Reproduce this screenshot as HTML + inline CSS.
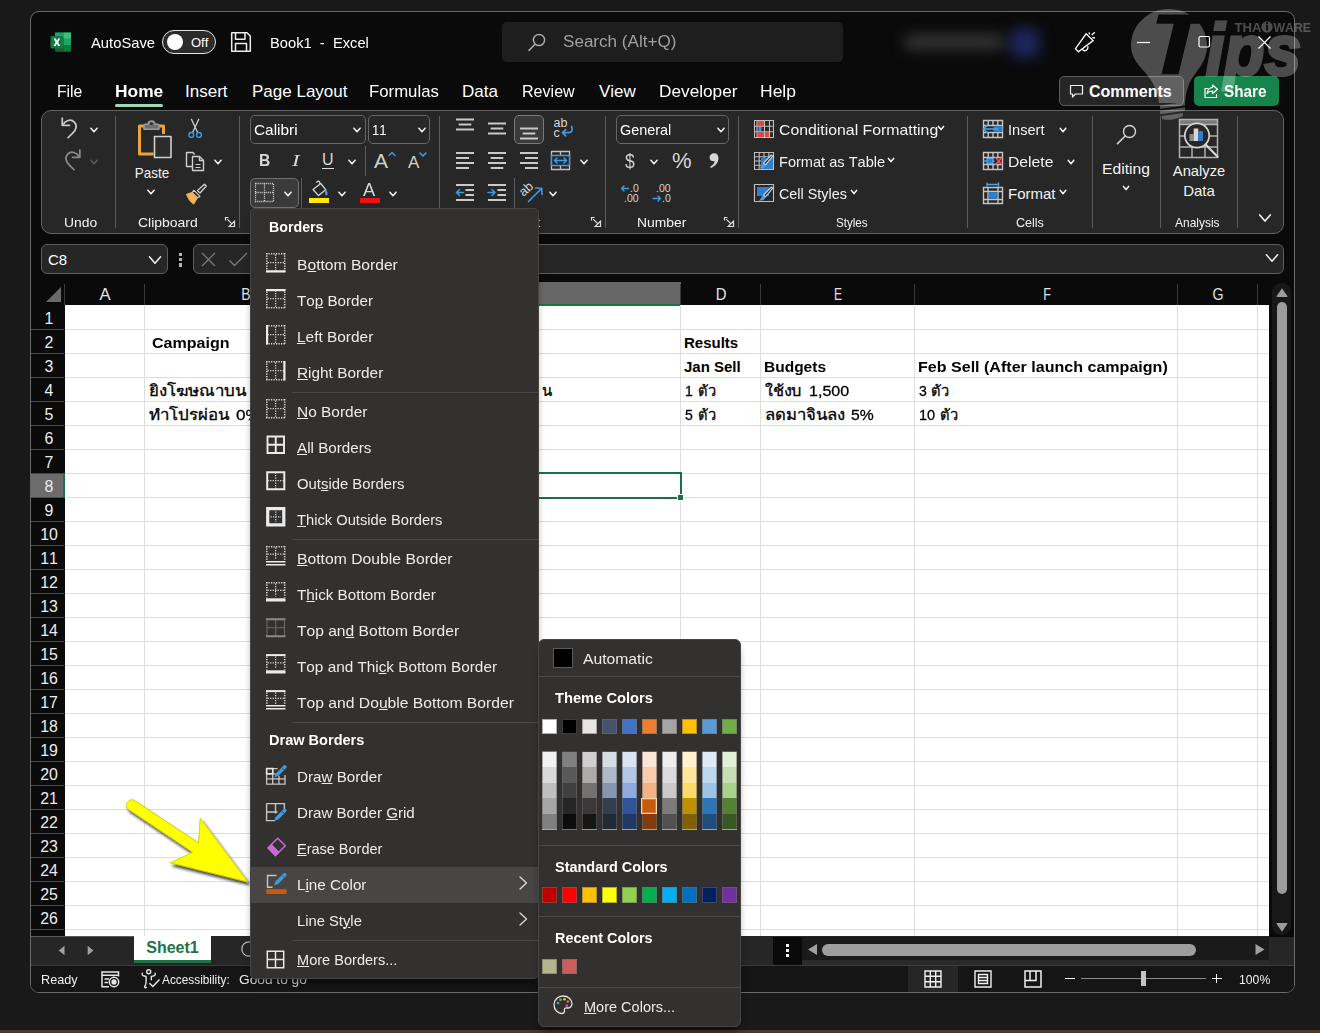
<!DOCTYPE html>
<html><head><meta charset="utf-8"><title>Excel</title><style>
html,body{margin:0;padding:0;background:#191919;}
#r{position:relative;width:1320px;height:1033px;overflow:hidden;background:#191919;font-family:"Liberation Sans",sans-serif;font-kerning:none;}
#r div,#r svg,#r span{position:absolute;box-sizing:border-box;}
#r span{white-space:nowrap;transform-origin:0 50%;line-height:20px;height:20px;}
#r u{text-decoration:underline;text-underline-offset:1px;text-decoration-thickness:1px;}
</style></head><body><div id="r">
<div style="left:30px;top:11px;width:1265px;height:982px;background:#0a0a0a;border:1px solid #6a6a6a;border-radius:9px;"></div>
<div style="left:0px;top:1030px;width:1320px;height:3px;background:#4a382d;"></div>
<svg style="left:50px;top:31px;" width="22" height="22" viewBox="0 0 22 22">
<rect x="5" y="1.500" width="16" height="19" rx="1.600" fill="#185c37"/>
<rect x="5" y="1.500" width="8.500" height="6.300" fill="#21a366"/>
<rect x="13.5" y="1.5" width="7.5" height="6.3" fill="#33c481"/>
<rect x="5" y="7.800" width="8.500" height="6.300" fill="#107c41"/>
<rect x="13.5" y="7.8" width="7.5" height="6.3" fill="#21a366"/>
<rect x="13.5" y="14.1" width="7.5" height="6.4" fill="#107c41"/>
<rect x="5" y="14.100" width="8.500" height="6.400" fill="#185c37"/>
<rect x="0.500" y="5" width="12.800" height="12.500" rx="1.400" fill="#107c41"/>
<path d="M3.600 7.500h2.200l1.150 2.400 1.150-2.400h2.100l-2.150 3.700 2.200 3.700H8.100l-1.250-2.500-1.250 2.500H3.500l2.200-3.700z" fill="#fff"/>
</svg>
<span style="left:91px;top:33px;font-size:15px;color:#fff;transform:scaleX(0.9844);">AutoSave</span>
<div style="left:162px;top:29.5px;width:54px;height:24.5px;background:#2b2b2b;border:1.8px solid #e4e4e4;border-radius:12.5px;"></div>
<div style="left:166.5px;top:33.5px;width:16.5px;height:16.5px;background:#ffffff;border-radius:9px;"></div>
<span style="left:191px;top:33px;font-size:13px;color:#fff;transform:scaleX(1.0000);">Off</span>
<svg style="left:230px;top:31px;" width="22" height="22" viewBox="0 0 22 22"><path d="M1.700 1.700h15.300l3.300 3.300v15.300h-18.600z M5.500 1.700v6.500h9.500v-6.500 M5.500 20.300v-7.800h11v7.800" fill="none" stroke="#ececec" stroke-width="1.500" stroke-linejoin="round"/></svg>
<span style="left:270px;top:33px;font-size:15px;color:#fff;transform:scaleX(0.9800);">Book1&nbsp; -&nbsp; Excel</span>
<div style="left:502px;top:22px;width:341px;height:40px;background:#1e1e1e;border-radius:5px;"></div>
<svg style="left:526px;top:31px;" width="22" height="22" viewBox="0 0 22 22"><circle cx="13" cy="9" r="5.6" fill="none" stroke="#a8a8a8" stroke-width="1.5"/><path d="M9 13.2L3 19.4" stroke="#a8a8a8" stroke-width="1.6" stroke-linecap="round"/></svg>
<span style="left:563px;top:32px;font-size:16px;color:#a0a0a0;transform:scaleX(1.0667);">Search (Alt+Q)</span>
<div style="left:898px;top:26px;width:150px;height:34px;filter:blur(7px);"><div style="left:6px;top:9px;width:100px;height:14px;background:#383838;border-radius:6px;"></div><div style="left:112px;top:2px;width:30px;height:30px;background:#1f2a66;border-radius:10px;opacity:.9;"></div></div>
<svg style="left:1073px;top:29px;" width="24" height="24" viewBox="0 0 24 24"><g fill="none" stroke="#f4f4f4" stroke-width="1.400" stroke-linejoin="miter" stroke-linecap="butt"><path d="M13.100 4.800l7 6.800-14.700 11.100-2.900-3z"/><path d="M9.100 19.700c1 2.600 4.400 2.600 5.400 0.300 0.400-0.900 0.500-1.800 0.300-2.700"/><path d="M16 3.400l0.600 1.900M18.700 6l3.100-2.700M19.300 8.500l2.700 0.400" stroke-width="1.500"/></g></svg>
<svg style="left:1134px;top:34px;" width="18" height="18" viewBox="0 0 18 18"><path d="M3 8.5h13" stroke="#fff" stroke-width="1.2"/></svg>
<svg style="left:1196px;top:34px;" width="18" height="18" viewBox="0 0 18 18"><rect x="3" y="2.5" width="10.5" height="10.5" rx="1.5" fill="none" stroke="#fff" stroke-width="1.2"/></svg>
<svg style="left:1255px;top:33px;" width="20" height="20" viewBox="0 0 20 20"><path d="M3.5 3.5l12 12M15.5 3.5l-12 12" stroke="#fff" stroke-width="1.2"/></svg>
<span style="left:57px;top:82px;font-size:17px;color:#fff;transform:scaleX(0.9259);">File</span>
<span style="left:115px;top:82px;font-size:17px;color:#fff;font-weight:700;transform:scaleX(1.0217);">Home</span>
<span style="left:185px;top:82px;font-size:17px;color:#fff;transform:scaleX(1.0000);">Insert</span>
<span style="left:252px;top:82px;font-size:17px;color:#fff;transform:scaleX(1.0000);">Page Layout</span>
<span style="left:369px;top:82px;font-size:17px;color:#fff;transform:scaleX(0.9857);">Formulas</span>
<span style="left:462px;top:82px;font-size:17px;color:#fff;transform:scaleX(1.0000);">Data</span>
<span style="left:522px;top:82px;font-size:17px;color:#fff;transform:scaleX(0.9455);">Review</span>
<span style="left:599px;top:82px;font-size:17px;color:#fff;transform:scaleX(1.0000);">View</span>
<span style="left:659px;top:82px;font-size:17px;color:#fff;transform:scaleX(1.0132);">Developer</span>
<span style="left:760px;top:82px;font-size:17px;color:#fff;transform:scaleX(1.0294);">Help</span>
<div style="left:115px;top:103.6px;width:48px;height:3.1px;background:#9fd7b9;border-radius:2px;"></div>
<div style="left:1059px;top:76px;width:125px;height:30px;background:#262626;border:1px solid #5a5a5a;border-radius:5px;"></div>
<svg style="left:1068px;top:83px;" width="17" height="17" viewBox="0 0 17 17"><path d="M2.5 2.5h12v8.500h-7l-3 3v-3h-2z" fill="none" stroke="#f0f0f0" stroke-width="1.2" stroke-linejoin="round"/></svg>
<span style="left:1089px;top:82px;font-size:16px;color:#fff;font-weight:700;transform:scaleX(1.0000);">Comments</span>
<div style="left:1194px;top:76px;width:85px;height:30px;background:#15854b;border-radius:5px;"></div>
<svg style="left:1202px;top:82px;" width="18" height="18" viewBox="0 0 18 18"><g fill="none" stroke="#fff" stroke-width="1.2" stroke-linejoin="round" stroke-linecap="round"><path d="M6 6.500H3v9h11.500v-3"/><path d="M10.500 3l5 4.200-5 4.300V9c-2.600 0-4.200 0.800-5.400 2.600 0.300-3.400 2.200-5.800 5.400-6.100z"/></g></svg>
<span style="left:1224px;top:82px;font-size:16px;color:#fff;font-weight:700;transform:scaleX(0.9556);">Share</span>
<div style="left:41px;top:110px;width:1243px;height:124px;background:#272727;border:1px solid #626262;border-radius:10px;"></div>
<div style="left:115px;top:116px;width:1px;height:112px;background:#5c5c5c;"></div>
<div style="left:239px;top:116px;width:1px;height:112px;background:#5c5c5c;"></div>
<div style="left:439px;top:116px;width:1px;height:112px;background:#5c5c5c;"></div>
<div style="left:605px;top:116px;width:1px;height:112px;background:#5c5c5c;"></div>
<div style="left:738px;top:116px;width:1px;height:112px;background:#5c5c5c;"></div>
<div style="left:967px;top:116px;width:1px;height:112px;background:#5c5c5c;"></div>
<div style="left:1092px;top:116px;width:1px;height:112px;background:#5c5c5c;"></div>
<div style="left:1160px;top:116px;width:1px;height:112px;background:#5c5c5c;"></div>
<div style="left:1237px;top:116px;width:1px;height:112px;background:#5c5c5c;"></div>
<span style="left:64px;top:213px;font-size:13px;color:#f2f2f2;transform:scaleX(1.0667);">Undo</span>
<span style="left:138px;top:213px;font-size:13px;color:#f2f2f2;transform:scaleX(1.0741);">Clipboard</span>
<span style="left:637px;top:213px;font-size:13px;color:#f2f2f2;transform:scaleX(1.0667);">Number</span>
<span style="left:836px;top:213px;font-size:13px;color:#f2f2f2;transform:scaleX(0.8919);">Styles</span>
<span style="left:1016px;top:213px;font-size:13px;color:#f2f2f2;transform:scaleX(0.9655);">Cells</span>
<span style="left:1175px;top:213px;font-size:13px;color:#f2f2f2;transform:scaleX(0.9200);">Analysis</span>
<span style="left:536.5px;top:213px;font-size:13px;color:#f2f2f2;">t</span>
<svg style="left:224px;top:216px;" width="12" height="12" viewBox="0 0 12 12"><path d="M1.5 4.5v-3h3 M3.200 3.200l5 5 M10.500 5.200v5.300h-5.300z" fill="none" stroke="#e0e0e0" stroke-width="1.2" stroke-linejoin="miter"/></svg>
<svg style="left:590px;top:216px;" width="12" height="12" viewBox="0 0 12 12"><path d="M1.5 4.5v-3h3 M3.200 3.200l5 5 M10.500 5.200v5.300h-5.300z" fill="none" stroke="#e0e0e0" stroke-width="1.2" stroke-linejoin="miter"/></svg>
<svg style="left:723px;top:216px;" width="12" height="12" viewBox="0 0 12 12"><path d="M1.5 4.5v-3h3 M3.200 3.200l5 5 M10.500 5.200v5.300h-5.300z" fill="none" stroke="#e0e0e0" stroke-width="1.2" stroke-linejoin="miter"/></svg>
<svg style="left:57px;top:114px;" width="28" height="28" viewBox="0 0 28 28"><g transform="scale(1.17)" fill="none" stroke="#c8c8c8" stroke-width="1.5" stroke-linecap="round" stroke-linejoin="round"><path d="M4.5 3.5v6.200h6.200"/><path d="M4.800 9.500c2.200-4 7-5.600 10-2.600 2.800 2.800 1.600 6.600-1.400 9.400l-4 4"/></g></svg>
<svg style="left:86px;top:122px;" width="16" height="16" viewBox="0 0 16 16"><path d="M4.9 6.2L8 9.8L11.100 6.2" fill="none" stroke="#f0f0f0" stroke-width="1.55" stroke-linecap="round" stroke-linejoin="round"/></svg>
<svg style="left:57px;top:146px;" width="28" height="28" viewBox="0 0 28 28"><g transform="scale(1.17)" fill="none" stroke="#8a8a8a" stroke-width="1.5" stroke-linecap="round" stroke-linejoin="round"><path d="M19.500 3.500v6.200h-6.200"/><path d="M19.200 9.500c-2.200-4-7-5.600-10-2.600-2.800 2.800-1.600 6.600 1.400 9.400l4 4"/></g></svg>
<svg style="left:86px;top:154px;" width="16" height="16" viewBox="0 0 16 16"><path d="M4.9 6.2L8 9.8L11.100 6.2" fill="none" stroke="#5a5a5a" stroke-width="1.55" stroke-linecap="round" stroke-linejoin="round"/></svg>
<svg style="left:134px;top:118px;" width="40" height="42" viewBox="0 0 40 42"><g fill="none" stroke-linejoin="round">
<path d="M10 8H5.500v28h14" stroke="#e8a33d" stroke-width="3"/>
<path d="M24 8h5.500v8" stroke="#e8a33d" stroke-width="3"/>
<path d="M10 11.200V7.400c0-0.800 0.500-1.200 1.200-1.200h3c0-4.400 6.600-4.400 6.600 0h3c0.700 0 1.200 0.400 1.200 1.200v3.800z" stroke="#9a9a9a" stroke-width="1.500" fill="#6e6e6e"/>
<circle cx="17.500" cy="5.800" r="1.300" fill="#272727" stroke="none"/>
<rect x="20.500" y="18.500" width="16.500" height="21" stroke="#d0d0d0" stroke-width="1.600" fill="#2c2c2c"/>
</g></svg>
<span style="left:152px;top:163px;font-size:15px;color:#f2f2f2;transform:translateX(-50%) scaleX(0.8947);transform-origin:50% 50%;">Paste</span>
<svg style="left:143px;top:184px;" width="16" height="16" viewBox="0 0 16 16"><path d="M4.9 6.2L8 9.8L11.100 6.2" fill="none" stroke="#f0f0f0" stroke-width="1.55" stroke-linecap="round" stroke-linejoin="round"/></svg>
<svg style="left:185px;top:117px;" width="22" height="26" viewBox="0 0 22 26"><g transform="scale(0.920)" fill="none" stroke-linecap="round"><path d="M7 2.500l6.600 14M15 2.500L8.400 16.500" stroke="#d0d0d0" stroke-width="1.4"/><circle cx="6.8" cy="19.500" r="2.6" stroke="#3f9be0" stroke-width="1.5"/><circle cx="15.200" cy="19.500" r="2.6" stroke="#3f9be0" stroke-width="1.5"/></g></svg>
<svg style="left:183px;top:150px;" width="24" height="24" viewBox="0 0 24 24"><g fill="none" stroke="#d0d0d0" stroke-width="1.4" stroke-linejoin="round"><path d="M9.500 16.500h-6v-14h6.200l2 2"/><path d="M9.500 6.500h7l4 4v10h-11z" fill="#262626"/><path d="M16.500 6.500v4h4"/><path d="M12.500 14.500h5M12.500 17.500h5" stroke-width="1.1"/></g></svg>
<svg style="left:210px;top:154px;" width="16" height="16" viewBox="0 0 16 16"><path d="M4.9 6.2L8 9.8L11.100 6.2" fill="none" stroke="#f0f0f0" stroke-width="1.55" stroke-linecap="round" stroke-linejoin="round"/></svg>
<svg style="left:184px;top:182px;" width="24" height="24" viewBox="0 0 24 24"><g stroke-linejoin="round"><path d="M13.500 8.500l7-6.300 1.800 1.800-6.300 7z" fill="none" stroke="#d0d0d0" stroke-width="1.3"/><path d="M9.800 8.200l6.200 6.200-2.600 1.400-5.200-5z" fill="none" stroke="#d0d0d0" stroke-width="1.2"/><path d="M2.5 12.200l5.500-1.800 5.400 5.600-3.600 6.200c-3.200-2-6-5.600-7.300-10z" fill="#f0b45a" stroke="#e8a33d" stroke-width="1"/></g></svg>
<div style="left:250px;top:114.5px;width:116px;height:29.5px;background:#272727;border:1px solid #666;border-radius:5px;"></div>
<span style="left:254px;top:120px;font-size:15px;color:#fff;transform:scaleX(1.0244);">Calibri</span>
<svg style="left:349px;top:122px;" width="16" height="16" viewBox="0 0 16 16"><path d="M4.9 6.2L8 9.8L11.100 6.2" fill="none" stroke="#f0f0f0" stroke-width="1.55" stroke-linecap="round" stroke-linejoin="round"/></svg>
<div style="left:368px;top:114.5px;width:62px;height:29.5px;background:#272727;border:1px solid #666;border-radius:5px;"></div>
<span style="left:372px;top:120px;font-size:15px;color:#fff;transform:scaleX(0.8750);">11</span>
<svg style="left:414px;top:122px;" width="16" height="16" viewBox="0 0 16 16"><path d="M4.9 6.2L8 9.8L11.100 6.2" fill="none" stroke="#f0f0f0" stroke-width="1.55" stroke-linecap="round" stroke-linejoin="round"/></svg>
<span style="left:259px;top:151px;font-size:17px;color:#d8d8d8;font-weight:700;transform:scaleX(0.9167);">B</span>
<span style="left:292px;top:151px;font-size:17px;color:#d8d8d8;font-style:italic;transform:scaleX(1.3333);font-family:'Liberation Serif',serif;">I</span>
<span style="left:322px;top:150px;font-size:16px;color:#d8d8d8;transform:scaleX(1.0000);">U</span>
<div style="left:322px;top:168px;width:12px;height:1.3px;background:#d8d8d8;"></div>
<svg style="left:344px;top:154px;" width="16" height="16" viewBox="0 0 16 16"><path d="M4.9 6.2L8 9.8L11.100 6.2" fill="none" stroke="#f0f0f0" stroke-width="1.55" stroke-linecap="round" stroke-linejoin="round"/></svg>
<div style="left:365px;top:146px;width:1px;height:30px;background:#5c5c5c;"></div>
<span style="left:374px;top:151px;font-size:21px;color:#d0d0d0;transform:scaleX(1.0000);">A</span>
<svg style="left:387px;top:150px;" width="10" height="10" viewBox="0 0 10 10"><path d="M2 5.500L5 2.500 8 5.500" fill="none" stroke="#3f9be0" stroke-width="1.400" stroke-linecap="round" stroke-linejoin="round"/></svg>
<span style="left:408px;top:153px;font-size:17px;color:#d0d0d0;transform:scaleX(1.0000);">A</span>
<svg style="left:418px;top:150px;" width="10" height="10" viewBox="0 0 10 10"><path d="M2 3L5 6 8 3" fill="none" stroke="#3f9be0" stroke-width="1.6" stroke-linecap="round" stroke-linejoin="round"/></svg>
<div style="left:250px;top:178px;width:49px;height:30px;background:#3a3a3a;border:1px solid #717171;border-radius:5px;"></div>
<svg style="left:254px;top:182px;" width="22" height="22" viewBox="0 0 22 22"><g fill="none" stroke="#dcdcdc" stroke-width="1.300" stroke-dasharray="1 1.050"><rect x="1.500" y="1.500" width="18" height="18"/><path d="M10.500 1.500v18M1.500 10.500h18"/></g></svg>
<svg style="left:280px;top:186px;" width="16" height="16" viewBox="0 0 16 16"><path d="M4.9 6.2L8 9.8L11.100 6.2" fill="none" stroke="#f0f0f0" stroke-width="1.55" stroke-linecap="round" stroke-linejoin="round"/></svg>
<div style="left:301px;top:178px;width:1px;height:30px;background:#5c5c5c;"></div>
<svg style="left:309px;top:180px;" width="22" height="18" viewBox="0 0 22 18"><g stroke-linejoin="round"><path d="M7.200 2.500l2-1.400 1.300 0.400 0.600 3.800" fill="none" stroke="#d6d6d6" stroke-width="1.2"/><path d="M4 9.500l7.800-6 5 6.300-7.300 5.800z" fill="#262626" stroke="#d6d6d6" stroke-width="1.3"/><path d="M16.800 9.200c1.400 1.600 2.200 3.400 1.800 5.200-0.600 1.400-2.400 1.200-2.600-0.400-0.100-1.600 0.600-3 0.800-4.800z" fill="#3f9be0"/></g></svg>
<div style="left:309px;top:198px;width:20px;height:5px;background:#ffeb00;"></div>
<svg style="left:334px;top:186px;" width="16" height="16" viewBox="0 0 16 16"><path d="M4.9 6.2L8 9.8L11.100 6.2" fill="none" stroke="#f0f0f0" stroke-width="1.55" stroke-linecap="round" stroke-linejoin="round"/></svg>
<span style="left:363px;top:180px;font-size:19px;color:#d6d6d6;transform:scaleX(0.9615);">A</span>
<div style="left:360px;top:198px;width:20px;height:5px;background:#ee1111;"></div>
<svg style="left:385px;top:186px;" width="16" height="16" viewBox="0 0 16 16"><path d="M4.9 6.2L8 9.8L11.100 6.2" fill="none" stroke="#f0f0f0" stroke-width="1.55" stroke-linecap="round" stroke-linejoin="round"/></svg>
<svg style="left:454px;top:114px;" width="24" height="24" viewBox="0 0 24 24"><path d="M2.0 5.5H20.0M4.7 10.500H17.300M2.0 15.500H20.0" stroke="#cacaca" stroke-width="1.8" fill="none"/></svg>
<svg style="left:486px;top:118px;" width="24" height="24" viewBox="0 0 24 24"><path d="M2.0 5.5H20.0M4.7 10.500H17.300M2.0 15.500H20.0" stroke="#cacaca" stroke-width="1.8" fill="none"/></svg>
<div style="left:514px;top:114.5px;width:30px;height:29.5px;background:#3a3a3a;border:1px solid #7a7a7a;border-radius:5px;"></div>
<svg style="left:518px;top:122px;" width="24" height="24" viewBox="0 0 24 24"><path d="M2.0 6.5H20.0M4.7 11.500H17.300M2.0 16.500H20.0" stroke="#cacaca" stroke-width="1.8" fill="none"/></svg>
<svg style="left:553px;top:117px;" width="24" height="24" viewBox="0 0 24 24"><text x="0.500" y="9.500" font-family="Liberation Sans" font-size="12.500" fill="#d6d6d6">ab</text><text x="0.500" y="19.500" font-family="Liberation Sans" font-size="12.500" fill="#d6d6d6">c</text><path d="M18.500 9.500c1.800 2.600 0.400 6.200-3 6.200H9.500M12.700 12.600l-3.300 3.100 3.300 3.100" fill="none" stroke="#3f9be0" stroke-width="1.700" stroke-linecap="round" stroke-linejoin="round"/></svg>
<svg style="left:454px;top:148px;" width="24" height="24" viewBox="0 0 24 24"><path d="M2.0 5.0H20.0M2.0 10.0H15.0M2.0 15.0H20.0M2.0 20.0H15.0" stroke="#cacaca" stroke-width="1.8" fill="none"/></svg>
<svg style="left:486px;top:148px;" width="24" height="24" viewBox="0 0 24 24"><path d="M2.0 5.0H20.0M4.7 10.0H17.300M2.0 15.0H20.0M4.7 20.0H17.300" stroke="#cacaca" stroke-width="1.8" fill="none"/></svg>
<svg style="left:518px;top:148px;" width="24" height="24" viewBox="0 0 24 24"><path d="M2.0 5.0H20.0M7.0 10.0H20.0M2.0 15.0H20.0M7.0 20.0H20.0" stroke="#cacaca" stroke-width="1.8" fill="none"/></svg>
<svg style="left:550px;top:150px;" width="22" height="22" viewBox="0 0 22 22"><g fill="none"><path d="M1.500 1.500h18v18h-18z M10.500 1.500v4M10.500 15.500v4" stroke="#c0c0c0" stroke-width="1.300"/><rect x="1.500" y="5.500" width="18" height="10" fill="#272727" stroke="#3f9be0" stroke-width="1.500"/><path d="M4.500 10.500h12M7 8L4.500 10.500l2.500 2.500M14 8l2.500 2.500-2.500 2.500" stroke="#3f9be0" stroke-width="1.500" stroke-linecap="round" stroke-linejoin="round"/></g></svg>
<svg style="left:576px;top:154px;" width="16" height="16" viewBox="0 0 16 16"><path d="M4.9 6.2L8 9.8L11.100 6.2" fill="none" stroke="#f0f0f0" stroke-width="1.55" stroke-linecap="round" stroke-linejoin="round"/></svg>
<svg style="left:454px;top:180px;" width="24" height="24" viewBox="0 0 24 24"><path d="M2.0 5.0H20.0M11.500 10.0H20.0M11.500 15.0H20.0M2.0 20.0H20.0" stroke="#cacaca" stroke-width="1.8" fill="none"/></svg>
<svg style="left:454px;top:184px;" width="12" height="16" viewBox="0 0 12 16"><path d="M2.500 8.500h7M5.500 5.500L2.500 8.500l3 3" stroke="#3f9be0" stroke-width="1.600" fill="none" stroke-linecap="round" stroke-linejoin="round"/></svg>
<svg style="left:486px;top:180px;" width="24" height="24" viewBox="0 0 24 24"><path d="M2.0 5.0H20.0M11.500 10.0H20.0M11.500 15.0H20.0M2.0 20.0H20.0" stroke="#cacaca" stroke-width="1.8" fill="none"/></svg>
<svg style="left:486px;top:184px;" width="12" height="16" viewBox="0 0 12 16"><path d="M2 8.500h7M6 5.500l3 3-3 3" stroke="#3f9be0" stroke-width="1.600" fill="none" stroke-linecap="round" stroke-linejoin="round"/></svg>
<div style="left:514px;top:178px;width:1px;height:30px;background:#5c5c5c;"></div>
<svg style="left:520px;top:180px;" width="26" height="26" viewBox="0 0 26 26"><text x="0" y="0" transform="translate(3.500 17) rotate(-42)" font-family="Liberation Sans" font-size="13" fill="#d6d6d6">ab</text><path d="M8.500 21.500L21.500 8.500M15.500 8l6.200 0.300 0.300 6.200" fill="none" stroke="#3f9be0" stroke-width="1.600" stroke-linecap="round" stroke-linejoin="round"/></svg>
<svg style="left:545px;top:186px;" width="16" height="16" viewBox="0 0 16 16"><path d="M4.9 6.2L8 9.8L11.100 6.2" fill="none" stroke="#f0f0f0" stroke-width="1.55" stroke-linecap="round" stroke-linejoin="round"/></svg>
<div style="left:616px;top:114.5px;width:113px;height:29.5px;background:#272727;border:1px solid #666;border-radius:5px;"></div>
<span style="left:620px;top:120px;font-size:15px;color:#fff;transform:scaleX(0.9615);">General</span>
<svg style="left:713px;top:122px;" width="16" height="16" viewBox="0 0 16 16"><path d="M4.9 6.2L8 9.8L11.100 6.2" fill="none" stroke="#f0f0f0" stroke-width="1.55" stroke-linecap="round" stroke-linejoin="round"/></svg>
<span style="left:625px;top:151px;font-size:21px;color:#cfcfcf;transform:scaleX(0.8333);">$</span>
<svg style="left:646px;top:154px;" width="16" height="16" viewBox="0 0 16 16"><path d="M4.9 6.2L8 9.8L11.100 6.2" fill="none" stroke="#f0f0f0" stroke-width="1.55" stroke-linecap="round" stroke-linejoin="round"/></svg>
<span style="left:672px;top:151px;font-size:22px;color:#d6d6d6;transform:scaleX(1.0000);">%</span>
<svg style="left:707px;top:151px;" width="14" height="20" viewBox="0 0 14 20"><path d="M7.200 2.200c2.600 0 4.300 2 4.300 4.900 0 4.400-3 8.200-7.600 9.900l-0.700-1.400c2.600-1.300 4.200-3.300 4.500-5.600-0.400 0.200-0.900 0.300-1.400 0.300-2.200 0-3.700-1.600-3.700-3.900 0-2.400 1.800-4.200 4.600-4.200z" fill="#d6d6d6"/></svg>
<svg style="left:619px;top:182px;" width="24" height="22" viewBox="0 0 24 22"><path d="M2.5 6.500h7M5 4L2.500 6.500 5 9" fill="none" stroke="#3f9be0" stroke-width="1.4" stroke-linecap="round" stroke-linejoin="round"/><text x="11" y="10" font-family="Liberation Sans" font-size="10.5" fill="#d6d6d6">.0</text><text x="5" y="20" font-family="Liberation Sans" font-size="10.5" fill="#d6d6d6">.00</text></svg>
<svg style="left:651px;top:182px;" width="24" height="22" viewBox="0 0 24 22"><text x="5" y="10" font-family="Liberation Sans" font-size="10.5" fill="#d6d6d6">.00</text><path d="M2 16.500h7.500M7 14l2.500 2.500L7 19" fill="none" stroke="#3f9be0" stroke-width="1.4" stroke-linecap="round" stroke-linejoin="round"/><text x="11" y="20" font-family="Liberation Sans" font-size="10.5" fill="#d6d6d6">.0</text></svg>
<svg style="left:753px;top:119px;" width="22" height="20" viewBox="0 0 22 20"><rect x="4.500" y="2" width="6.500" height="4.800" fill="#e8423a"/><rect x="5.500" y="7.600" width="3" height="4.800" fill="#3f8fe0"/><rect x="4.500" y="13.200" width="11.500" height="4.800" fill="#e8423a"/><path d="M1.500 1.500h19v17h-19z M1.500 7.200h19M1.500 12.800h19 M4 1.500v17M11.500 1.500v17M16.500 1.500v17" fill="none" stroke="#bdbdbd" stroke-width="1.100"/></svg>
<span style="left:779px;top:120px;font-size:15px;color:#f2f2f2;transform:scaleX(1.0548);">Conditional Formatting</span>
<svg style="left:933px;top:120px;" width="16" height="16" viewBox="0 0 16 16"><path d="M5.4 6.4L8 9.6L10.600 6.4" fill="none" stroke="#f0f0f0" stroke-width="1.55" stroke-linecap="round" stroke-linejoin="round"/></svg>
<svg style="left:753px;top:151px;" width="22" height="20" viewBox="0 0 22 20"><path d="M1.5 1.5h19v17h-19z M1.5 5.800h19M1.5 10h19M1.5 14.200h19 M6.200 1.5v17M11 1.5v17M15.800 1.5v17" fill="none" stroke="#bdbdbd" stroke-width="1.1"/><rect x="8" y="7" width="12" height="11" fill="#2f7fd0"/><path d="M19.800 5.2L12.500 13.800l-2-1.600 7.800-8.200z" fill="#262626" stroke="#d6d6d6" stroke-width="1.1" stroke-linejoin="round"/><path d="M10.200 12.400l2.200 1.900c-0.600 2.400-3 3.600-6.400 3.200 1.800-1 1.800-3.600 4.200-5.100z" fill="#4fa3e3"/></svg>
<span style="left:779px;top:152px;font-size:15px;color:#f2f2f2;transform:scaleX(0.9720);">Format as Table</span>
<svg style="left:883px;top:152px;" width="16" height="16" viewBox="0 0 16 16"><path d="M5.4 6.4L8 9.6L10.600 6.4" fill="none" stroke="#f0f0f0" stroke-width="1.55" stroke-linecap="round" stroke-linejoin="round"/></svg>
<svg style="left:753px;top:183px;" width="22" height="20" viewBox="0 0 22 20"><path d="M1.5 1.5h19v17h-19z M1.5 5.800h19M1.5 10h19M1.5 14.200h19 M6.200 1.5v17M11 1.5v17M15.800 1.5v17" fill="none" stroke="#bdbdbd" stroke-width="1.1"/><rect x="2.2" y="2.2" width="17.6" height="15.6" fill="#262626"/><rect x="4" y="4" width="12" height="9" fill="#2f7fd0"/><path d="M1.5 1.5h19v17h-19z" fill="none" stroke="#bdbdbd" stroke-width="1.1"/><path d="M19.800 5.2L12.500 13.800l-2-1.600 7.800-8.200z" fill="#262626" stroke="#d6d6d6" stroke-width="1.1" stroke-linejoin="round"/><path d="M10.200 12.400l2.200 1.900c-0.600 2.400-3 3.600-6.400 3.200 1.800-1 1.800-3.600 4.200-5.100z" fill="#4fa3e3"/></svg>
<span style="left:779px;top:184px;font-size:15px;color:#f2f2f2;transform:scaleX(0.9571);">Cell Styles</span>
<svg style="left:846px;top:184px;" width="16" height="16" viewBox="0 0 16 16"><path d="M5.4 6.4L8 9.6L10.600 6.4" fill="none" stroke="#f0f0f0" stroke-width="1.55" stroke-linecap="round" stroke-linejoin="round"/></svg>
<svg style="left:982px;top:119px;" width="22" height="20" viewBox="0 0 22 20"><path d="M1.500 1.500h19v17h-19z M1.500 6.500h19M1.500 13.500h19 M6.200 1.500v5M11 1.500v5M15.800 1.500v5M6.200 13.500v5M11 13.500v5M15.800 13.500v5" fill="none" stroke="#c4c4c4" stroke-width="1.400"/><rect x="11.500" y="7.300" width="9" height="5.400" fill="#2f7fd0"/><path d="M1.500 10h14M4.800 6.800L1.500 10l3.300 3.200" fill="none" stroke="#4aa3e8" stroke-width="1.600" stroke-linecap="round" stroke-linejoin="round"/></svg>
<span style="left:1008px;top:120px;font-size:15px;color:#f2f2f2;transform:scaleX(0.9730);">Insert</span>
<svg style="left:1055px;top:122px;" width="16" height="16" viewBox="0 0 16 16"><path d="M5.2 6.3L8 9.7L10.800 6.3" fill="none" stroke="#f0f0f0" stroke-width="1.55" stroke-linecap="round" stroke-linejoin="round"/></svg>
<svg style="left:982px;top:151px;" width="22" height="20" viewBox="0 0 22 20"><path d="M1.500 1.500h19v17h-19z M1.500 6.500h19M1.500 13.500h19 M6.200 1.500v5M11 1.500v5M15.800 1.500v5M6.200 13.500v5M11 13.500v5M15.800 13.500v5" fill="none" stroke="#c4c4c4" stroke-width="1.400"/><rect x="5" y="7.200" width="6" height="5.600" fill="#2f7fd0" stroke="#6ab4f0" stroke-width="1"/><path d="M1.500 10h3.500M11 10h1.500" stroke="#4aa3e8" stroke-width="1.400"/><path d="M14 7l5.600 6M19.600 7l-5.600 6" stroke="#f04a4a" stroke-width="1.700" stroke-linecap="round"/></svg>
<span style="left:1008px;top:152px;font-size:15px;color:#f2f2f2;transform:scaleX(1.0476);">Delete</span>
<svg style="left:1063px;top:154px;" width="16" height="16" viewBox="0 0 16 16"><path d="M5.2 6.3L8 9.7L10.800 6.3" fill="none" stroke="#f0f0f0" stroke-width="1.55" stroke-linecap="round" stroke-linejoin="round"/></svg>
<svg style="left:982px;top:181px;" width="22" height="24" viewBox="0 0 22 24"><path d="M5 1.500v4M16.500 1.500v4M5 3.500h11.500" stroke="#4aa3e8" stroke-width="1.400" fill="none"/><path d="M1.500 6.500h19v16h-19z M1.500 10.500h19M1.500 18.500h19 M6 6.500v16M16 6.500v16" fill="none" stroke="#c4c4c4" stroke-width="1.400"/><rect x="6.700" y="11.200" width="8.600" height="6.600" fill="#2f7fd0"/></svg>
<span style="left:1008px;top:184px;font-size:15px;color:#f2f2f2;transform:scaleX(1.0000);">Format</span>
<svg style="left:1055px;top:184px;" width="16" height="16" viewBox="0 0 16 16"><path d="M5.2 6.3L8 9.7L10.800 6.3" fill="none" stroke="#f0f0f0" stroke-width="1.55" stroke-linecap="round" stroke-linejoin="round"/></svg>
<svg style="left:1114px;top:122px;" width="26" height="26" viewBox="0 0 26 26"><circle cx="15.500" cy="9.5" r="6" fill="none" stroke="#d6d6d6" stroke-width="1.4"/><path d="M11.200 14L3.500 21.600" stroke="#d6d6d6" stroke-width="1.5" stroke-linecap="round"/></svg>
<span style="left:1126px;top:159px;font-size:15px;color:#f2f2f2;transform:translateX(-50%) scaleX(1.0455);transform-origin:50% 50%;">Editing</span>
<svg style="left:1118px;top:180px;" width="16" height="16" viewBox="0 0 16 16"><path d="M5.4 6.4L8 9.6L10.600 6.4" fill="none" stroke="#f0f0f0" stroke-width="1.55" stroke-linecap="round" stroke-linejoin="round"/></svg>
<svg style="left:1178px;top:118px;" width="42" height="42" viewBox="0 0 42 42"><rect x="1.500" y="1.500" width="38" height="5" fill="#7a7a7a"/><path d="M1.500 1.500h38v38h-38z M1.500 6.500h38 M1.500 18h38M1.500 29h38 M14 6.500v33M27 6.500v33" fill="none" stroke="#b0b0b0" stroke-width="1.500"/>
<circle cx="19" cy="17.500" r="12.200" fill="#272727" stroke="#d6d6d6" stroke-width="1.700"/>
<rect x="11.500" y="16" width="4.200" height="7" fill="#8a8a8a"/><rect x="15.700" y="10.500" width="4.600" height="12.500" fill="#d8d8d8"/><rect x="20.300" y="13" width="4.600" height="10" fill="#2f7fd0"/>
<path d="M27.600 26.500l12 12.300" stroke="#d6d6d6" stroke-width="2.200" stroke-linecap="round"/></svg>
<span style="left:1199px;top:161px;font-size:15px;color:#f2f2f2;transform:translateX(-50%) scaleX(0.9811);transform-origin:50% 50%;">Analyze</span>
<span style="left:1199px;top:181px;font-size:15px;color:#f2f2f2;transform:translateX(-50%) scaleX(1.0000);transform-origin:50% 50%;">Data</span>
<svg style="left:1257px;top:210px;" width="16" height="16" viewBox="0 0 16 16"><path d="M2.7 4.9L8 11.100L13.300 4.9" fill="none" stroke="#f0f0f0" stroke-width="1.6" stroke-linecap="round" stroke-linejoin="round"/></svg>
<div style="left:41px;top:244px;width:127px;height:30px;background:#262626;border:1px solid #5c5c5c;border-radius:6px;"></div>
<span style="left:48px;top:250px;font-size:15px;color:#fff;transform:scaleX(1.0000);">C8</span>
<svg style="left:147px;top:252px;" width="16" height="16" viewBox="0 0 16 16"><path d="M2.4 4.7L8 11.300L13.600 4.7" fill="none" stroke="#f0f0f0" stroke-width="1.5" stroke-linecap="round" stroke-linejoin="round"/></svg>
<div style="left:178.8px;top:252.7px;width:3.3px;height:3.3px;background:#b4b4b4;"></div>
<div style="left:178.8px;top:258px;width:3.3px;height:3.3px;background:#b4b4b4;"></div>
<div style="left:178.8px;top:263.3px;width:3.3px;height:3.3px;background:#b4b4b4;"></div>
<div style="left:193px;top:244px;width:1091px;height:30px;background:#262626;border:1px solid #5c5c5c;border-radius:6px;"></div>
<svg style="left:199px;top:250px;" width="20" height="20" viewBox="0 0 20 20"><path d="M3 3l13 13M16 3L3 16" stroke="#7a7a7a" stroke-width="1.3"/></svg>
<svg style="left:227px;top:250px;" width="22" height="20" viewBox="0 0 22 20"><path d="M2.5 10.500l5 5L20 3" fill="none" stroke="#7a7a7a" stroke-width="1.3"/></svg>
<svg style="left:1264px;top:250px;" width="16" height="16" viewBox="0 0 16 16"><path d="M2.4 4.7L8 11.300L13.600 4.7" fill="none" stroke="#f0f0f0" stroke-width="1.5" stroke-linecap="round" stroke-linejoin="round"/></svg>
<div style="left:31px;top:282px;width:1238px;height:24px;background:#0a0a0a;"></div>
<div style="left:31px;top:305px;width:34px;height:631px;background:#0a0a0a;"></div>
<div style="left:65px;top:305px;width:1204px;height:631px;background:#ffffff;"></div>
<svg style="left:43px;top:285px;" width="20" height="19" viewBox="0 0 20 19"><path d="M18 2V17H3z" fill="#6a6a6a"/></svg>
<div style="left:346px;top:282px;width:335px;height:23px;background:#666666;"></div>
<div style="left:346px;top:304px;width:335px;height:1.7px;background:#1f7245;"></div>
<span style="left:105.0px;top:285px;font-size:17px;color:#e4e4e4;transform:translateX(-50%) scaleX(0.9818);transform-origin:50% 50%;">A</span>
<div style="left:144px;top:284px;width:1px;height:21px;background:#3a3a3a;"></div>
<div style="left:144px;top:305px;width:1px;height:631px;background:#dedede;"></div>
<span style="left:245.5px;top:285px;font-size:17px;color:#e4e4e4;transform:translateX(-50%) scaleX(0.8182);transform-origin:50% 50%;">B</span>
<div style="left:345px;top:284px;width:1px;height:21px;background:#3a3a3a;"></div>
<div style="left:345px;top:305px;width:1px;height:631px;background:#dedede;"></div>
<div style="left:680px;top:284px;width:1px;height:21px;background:#3a3a3a;"></div>
<div style="left:680px;top:305px;width:1px;height:631px;background:#dedede;"></div>
<span style="left:721.0px;top:285px;font-size:17px;color:#e4e4e4;transform:translateX(-50%) scaleX(0.8750);transform-origin:50% 50%;">D</span>
<div style="left:760px;top:284px;width:1px;height:21px;background:#3a3a3a;"></div>
<div style="left:760px;top:305px;width:1px;height:631px;background:#dedede;"></div>
<span style="left:838.0px;top:285px;font-size:17px;color:#e4e4e4;transform:translateX(-50%) scaleX(0.7091);transform-origin:50% 50%;">E</span>
<div style="left:914px;top:284px;width:1px;height:21px;background:#3a3a3a;"></div>
<div style="left:914px;top:305px;width:1px;height:631px;background:#dedede;"></div>
<span style="left:1046.5px;top:285px;font-size:17px;color:#e4e4e4;transform:translateX(-50%) scaleX(0.7400);transform-origin:50% 50%;">F</span>
<div style="left:1177px;top:284px;width:1px;height:21px;background:#3a3a3a;"></div>
<div style="left:1177px;top:305px;width:1px;height:631px;background:#dedede;"></div>
<span style="left:1218.0px;top:285px;font-size:17px;color:#e4e4e4;transform:translateX(-50%) scaleX(0.8308);transform-origin:50% 50%;">G</span>
<div style="left:1257px;top:284px;width:1px;height:21px;background:#3a3a3a;"></div>
<div style="left:1257px;top:305px;width:1px;height:631px;background:#dedede;"></div>
<div style="left:64px;top:284px;width:1px;height:21px;background:#3a3a3a;"></div>
<span style="left:48.5px;top:309px;font-size:17px;color:#ececec;transform:translateX(-50%) scaleX(0.9333);transform-origin:50% 50%;">1</span>
<div style="left:31px;top:329px;width:33px;height:1px;background:#484848;"></div>
<div style="left:65px;top:329px;width:1204px;height:1px;background:#dedede;"></div>
<span style="left:48.5px;top:333px;font-size:17px;color:#ececec;transform:translateX(-50%) scaleX(0.9333);transform-origin:50% 50%;">2</span>
<div style="left:31px;top:353px;width:33px;height:1px;background:#484848;"></div>
<div style="left:65px;top:353px;width:1204px;height:1px;background:#dedede;"></div>
<span style="left:48.5px;top:357px;font-size:17px;color:#ececec;transform:translateX(-50%) scaleX(0.9333);transform-origin:50% 50%;">3</span>
<div style="left:31px;top:377px;width:33px;height:1px;background:#484848;"></div>
<div style="left:65px;top:377px;width:1204px;height:1px;background:#dedede;"></div>
<span style="left:48.5px;top:381px;font-size:17px;color:#ececec;transform:translateX(-50%) scaleX(0.9333);transform-origin:50% 50%;">4</span>
<div style="left:31px;top:401px;width:33px;height:1px;background:#484848;"></div>
<div style="left:65px;top:401px;width:1204px;height:1px;background:#dedede;"></div>
<span style="left:48.5px;top:405px;font-size:17px;color:#ececec;transform:translateX(-50%) scaleX(0.9333);transform-origin:50% 50%;">5</span>
<div style="left:31px;top:425px;width:33px;height:1px;background:#484848;"></div>
<div style="left:65px;top:425px;width:1204px;height:1px;background:#dedede;"></div>
<span style="left:48.5px;top:429px;font-size:17px;color:#ececec;transform:translateX(-50%) scaleX(0.9333);transform-origin:50% 50%;">6</span>
<div style="left:31px;top:449px;width:33px;height:1px;background:#484848;"></div>
<div style="left:65px;top:449px;width:1204px;height:1px;background:#dedede;"></div>
<span style="left:48.5px;top:453px;font-size:17px;color:#ececec;transform:translateX(-50%) scaleX(0.9333);transform-origin:50% 50%;">7</span>
<div style="left:31px;top:473px;width:33px;height:1px;background:#484848;"></div>
<div style="left:65px;top:473px;width:1204px;height:1px;background:#dedede;"></div>
<div style="left:31px;top:474px;width:33px;height:24px;background:#6c6c6c;"></div>
<div style="left:63px;top:473px;width:2px;height:25px;background:#217346;"></div>
<span style="left:48.5px;top:477px;font-size:17px;color:#ececec;transform:translateX(-50%) scaleX(0.9333);transform-origin:50% 50%;">8</span>
<div style="left:31px;top:497px;width:33px;height:1px;background:#484848;"></div>
<div style="left:65px;top:497px;width:1204px;height:1px;background:#dedede;"></div>
<span style="left:48.5px;top:501px;font-size:17px;color:#ececec;transform:translateX(-50%) scaleX(0.9333);transform-origin:50% 50%;">9</span>
<div style="left:31px;top:521px;width:33px;height:1px;background:#484848;"></div>
<div style="left:65px;top:521px;width:1204px;height:1px;background:#dedede;"></div>
<span style="left:48.5px;top:525px;font-size:17px;color:#ececec;transform:translateX(-50%) scaleX(0.9333);transform-origin:50% 50%;">10</span>
<div style="left:31px;top:545px;width:33px;height:1px;background:#484848;"></div>
<div style="left:65px;top:545px;width:1204px;height:1px;background:#dedede;"></div>
<span style="left:48.5px;top:549px;font-size:17px;color:#ececec;transform:translateX(-50%) scaleX(0.9333);transform-origin:50% 50%;">11</span>
<div style="left:31px;top:569px;width:33px;height:1px;background:#484848;"></div>
<div style="left:65px;top:569px;width:1204px;height:1px;background:#dedede;"></div>
<span style="left:48.5px;top:573px;font-size:17px;color:#ececec;transform:translateX(-50%) scaleX(0.9333);transform-origin:50% 50%;">12</span>
<div style="left:31px;top:593px;width:33px;height:1px;background:#484848;"></div>
<div style="left:65px;top:593px;width:1204px;height:1px;background:#dedede;"></div>
<span style="left:48.5px;top:597px;font-size:17px;color:#ececec;transform:translateX(-50%) scaleX(0.9333);transform-origin:50% 50%;">13</span>
<div style="left:31px;top:617px;width:33px;height:1px;background:#484848;"></div>
<div style="left:65px;top:617px;width:1204px;height:1px;background:#dedede;"></div>
<span style="left:48.5px;top:621px;font-size:17px;color:#ececec;transform:translateX(-50%) scaleX(0.9333);transform-origin:50% 50%;">14</span>
<div style="left:31px;top:641px;width:33px;height:1px;background:#484848;"></div>
<div style="left:65px;top:641px;width:1204px;height:1px;background:#dedede;"></div>
<span style="left:48.5px;top:645px;font-size:17px;color:#ececec;transform:translateX(-50%) scaleX(0.9333);transform-origin:50% 50%;">15</span>
<div style="left:31px;top:665px;width:33px;height:1px;background:#484848;"></div>
<div style="left:65px;top:665px;width:1204px;height:1px;background:#dedede;"></div>
<span style="left:48.5px;top:669px;font-size:17px;color:#ececec;transform:translateX(-50%) scaleX(0.9333);transform-origin:50% 50%;">16</span>
<div style="left:31px;top:689px;width:33px;height:1px;background:#484848;"></div>
<div style="left:65px;top:689px;width:1204px;height:1px;background:#dedede;"></div>
<span style="left:48.5px;top:693px;font-size:17px;color:#ececec;transform:translateX(-50%) scaleX(0.9333);transform-origin:50% 50%;">17</span>
<div style="left:31px;top:713px;width:33px;height:1px;background:#484848;"></div>
<div style="left:65px;top:713px;width:1204px;height:1px;background:#dedede;"></div>
<span style="left:48.5px;top:717px;font-size:17px;color:#ececec;transform:translateX(-50%) scaleX(0.9333);transform-origin:50% 50%;">18</span>
<div style="left:31px;top:737px;width:33px;height:1px;background:#484848;"></div>
<div style="left:65px;top:737px;width:1204px;height:1px;background:#dedede;"></div>
<span style="left:48.5px;top:741px;font-size:17px;color:#ececec;transform:translateX(-50%) scaleX(0.9333);transform-origin:50% 50%;">19</span>
<div style="left:31px;top:761px;width:33px;height:1px;background:#484848;"></div>
<div style="left:65px;top:761px;width:1204px;height:1px;background:#dedede;"></div>
<span style="left:48.5px;top:765px;font-size:17px;color:#ececec;transform:translateX(-50%) scaleX(0.9333);transform-origin:50% 50%;">20</span>
<div style="left:31px;top:785px;width:33px;height:1px;background:#484848;"></div>
<div style="left:65px;top:785px;width:1204px;height:1px;background:#dedede;"></div>
<span style="left:48.5px;top:789px;font-size:17px;color:#ececec;transform:translateX(-50%) scaleX(0.9333);transform-origin:50% 50%;">21</span>
<div style="left:31px;top:809px;width:33px;height:1px;background:#484848;"></div>
<div style="left:65px;top:809px;width:1204px;height:1px;background:#dedede;"></div>
<span style="left:48.5px;top:813px;font-size:17px;color:#ececec;transform:translateX(-50%) scaleX(0.9333);transform-origin:50% 50%;">22</span>
<div style="left:31px;top:833px;width:33px;height:1px;background:#484848;"></div>
<div style="left:65px;top:833px;width:1204px;height:1px;background:#dedede;"></div>
<span style="left:48.5px;top:837px;font-size:17px;color:#ececec;transform:translateX(-50%) scaleX(0.9333);transform-origin:50% 50%;">23</span>
<div style="left:31px;top:857px;width:33px;height:1px;background:#484848;"></div>
<div style="left:65px;top:857px;width:1204px;height:1px;background:#dedede;"></div>
<span style="left:48.5px;top:861px;font-size:17px;color:#ececec;transform:translateX(-50%) scaleX(0.9333);transform-origin:50% 50%;">24</span>
<div style="left:31px;top:881px;width:33px;height:1px;background:#484848;"></div>
<div style="left:65px;top:881px;width:1204px;height:1px;background:#dedede;"></div>
<span style="left:48.5px;top:885px;font-size:17px;color:#ececec;transform:translateX(-50%) scaleX(0.9333);transform-origin:50% 50%;">25</span>
<div style="left:31px;top:905px;width:33px;height:1px;background:#484848;"></div>
<div style="left:65px;top:905px;width:1204px;height:1px;background:#dedede;"></div>
<span style="left:48.5px;top:909px;font-size:17px;color:#ececec;transform:translateX(-50%) scaleX(0.9333);transform-origin:50% 50%;">26</span>
<div style="left:31px;top:929px;width:33px;height:1px;background:#484848;"></div>
<div style="left:65px;top:929px;width:1204px;height:1px;background:#dedede;"></div>
<span style="left:152px;top:333px;font-size:15px;color:#000;font-weight:700;transform:scaleX(1.0704);">Campaign</span>
<span style="left:684px;top:333px;font-size:15px;color:#000;font-weight:700;transform:scaleX(1.0000);">Results</span>
<span style="left:684px;top:357px;font-size:15px;color:#000;font-weight:700;transform:scaleX(1.0000);">Jan Sell</span>
<span style="left:764px;top:357px;font-size:15px;color:#000;font-weight:700;transform:scaleX(1.0339);">Budgets</span>
<span style="left:918px;top:357px;font-size:15px;color:#000;font-weight:700;transform:scaleX(1.0702);">Feb Sell (After launch campaign)</span>
<div style="left:345px;top:471.7px;width:337.2px;height:27px;border:2.2px solid #1f6e43;"></div>
<div style="left:677px;top:494px;width:7px;height:7px;background:#fff;"></div>
<div style="left:678px;top:495px;width:5px;height:5px;background:#1f6e43;"></div>
<div style="left:1269px;top:282px;width:25px;height:655px;background:#0a0a0a;"></div>
<div style="left:1272px;top:283px;width:19px;height:652px;background:#181818;border-radius:9px;"></div>
<svg style="left:1274px;top:286px;" width="16" height="13" viewBox="0 0 16 13"><path d="M8 2.300l5.300 7.600c0.400 0.700 0 1.100-0.600 1.100h-9.400c-0.600 0-1-0.400-0.600-1.100z" fill="#9c9c9c"/></svg>
<div style="left:1276.5px;top:302px;width:10.5px;height:592px;background:#9c9c9c;border-radius:5px;"></div>
<svg style="left:1274px;top:921px;" width="16" height="13" viewBox="0 0 16 13"><path d="M8 10.700l5.300-7.600c0.400-0.700 0-1.100-0.600-1.100h-9.400c-0.600 0-1 0.400-0.600 1.100z" fill="#9c9c9c"/></svg>
<div style="left:31px;top:936px;width:1238px;height:30px;background:#262626;"></div>
<div style="left:31px;top:936px;width:103px;height:1px;background:#5a5a5a;"></div>
<div style="left:31px;top:965px;width:1263px;height:1px;background:#3a3a3a;"></div>
<svg style="left:56px;top:943px;" width="12" height="14" viewBox="0 0 12 14"><path d="M8.500 2.800v9.400l-5.700-4.700z" fill="#a0a0a0"/></svg>
<svg style="left:84px;top:943px;" width="12" height="14" viewBox="0 0 12 14"><path d="M3.700 2.800v9.400l5.700-4.700z" fill="#a0a0a0"/></svg>
<div style="left:134px;top:936px;width:77px;height:26px;background:#ffffff;"></div>
<div style="left:134px;top:960px;width:77px;height:2.5px;background:#1f7245;"></div>
<span style="left:172.5px;top:937.5px;font-size:16px;color:#217346;font-weight:700;transform:translateX(-50%) scaleX(1.0000);transform-origin:50% 50%;">Sheet1</span>
<svg style="left:240px;top:940px;" width="18" height="18" viewBox="0 0 18 18"><circle cx="9" cy="9" r="7.200" fill="none" stroke="#bdbdbd" stroke-width="1.200"/></svg>
<div style="left:773px;top:937px;width:29px;height:28px;background:#0a0a0a;"></div>
<div style="left:786px;top:944px;width:3.2px;height:3.2px;background:#f4f4f4;"></div>
<div style="left:786px;top:949px;width:3.2px;height:3.2px;background:#f4f4f4;"></div>
<div style="left:786px;top:954px;width:3.2px;height:3.2px;background:#f4f4f4;"></div>
<div style="left:802px;top:937px;width:467px;height:23px;background:#1a1a1a;"></div>
<div style="left:802px;top:960px;width:467px;height:5px;background:#2a2a2a;"></div>
<div style="left:1269px;top:937px;width:25px;height:28px;background:#262626;"></div>
<svg style="left:806px;top:942px;" width="12" height="15" viewBox="0 0 12 15"><path d="M11 2v11l-9-5.500z" fill="#a0a0a0"/></svg>
<svg style="left:1254px;top:942px;" width="12" height="15" viewBox="0 0 12 15"><path d="M1.500 2v11l9-5.500z" fill="#a0a0a0"/></svg>
<div style="left:822px;top:944px;width:374px;height:11.5px;background:#9e9e9e;border-radius:6px;"></div>
<div style="left:31px;top:966px;width:1263px;height:26px;background:#151515;border-radius:0 0 8px 8px;"></div>
<span style="left:41px;top:969.5px;font-size:13px;color:#f0f0f0;transform:scaleX(0.9730);">Ready</span>
<svg style="left:100px;top:969px;" width="22" height="20" viewBox="0 0 22 20"><g fill="none" stroke="#e6e6e6" stroke-width="1.500"><path d="M9 17.700h-7v-14.700h16.500v4.500"/><path d="M2 6.200h16.500M4.500 10h4.500M4.500 13.500h3.500" /><circle cx="14" cy="13" r="4.700" fill="#151515"/><circle cx="14" cy="13" r="1.900" fill="#e6e6e6"/></g></svg>
<svg style="left:140px;top:968px;" width="24" height="22" viewBox="0 0 24 22"><g fill="none" stroke="#e6e6e6" stroke-width="1.400" stroke-linecap="round" stroke-linejoin="round"><circle cx="8.700" cy="3.800" r="2"/><path d="M2.300 5.200c-0.600 1.400 0.400 2.600 1.800 2.800l2 0.400v5.400c0 2-0.500 3.400-1.300 4.600-0.600 1 0.800 1.800 1.500 0.900M15.100 5.200c0.600 1.400-0.400 2.600-1.800 2.800l-2 0.400v3.400"/><path d="M9.800 15.500l3 3 6.200-6.600" stroke-width="1.500"/></g></svg>
<span style="left:162.3px;top:969.5px;font-size:13px;color:#f0f0f0;transform:scaleX(0.9103);">Accessibility:</span>
<span style="left:238.6px;top:969.5px;font-size:13px;color:#f0f0f0;transform:scaleX(1.0547);">Good to go</span>
<div style="left:908px;top:966px;width:50px;height:26px;background:#262626;"></div>
<svg style="left:923px;top:969px;" width="20" height="20" viewBox="0 0 20 20"><path d="M2 2h16v16h-16z M2 7.300h16M2 12.700h16M7.300 2v16M12.700 2v16" fill="none" stroke="#f0f0f0" stroke-width="1.400"/></svg>
<svg style="left:973px;top:969px;" width="20" height="20" viewBox="0 0 20 20"><g fill="none" stroke="#f0f0f0" stroke-width="1.400"><path d="M2 2h16v16h-16z"/><path d="M5.500 5.500h9v9h-9zM5.500 8.500h9M5.500 11.500h9"/></g></svg>
<svg style="left:1023px;top:969px;" width="20" height="20" viewBox="0 0 20 20"><path d="M2 2h16v16h-16z M2 11.500h11v-9.500M7 2v9.500" fill="none" stroke="#f0f0f0" stroke-width="1.500"/></svg>
<div style="left:1065px;top:978px;width:10px;height:1.3px;background:#f0f0f0;"></div>
<div style="left:1081px;top:978px;width:125px;height:1px;background:#8a8a8a;"></div>
<div style="left:1141px;top:971px;width:5px;height:15px;background:#c4c4c4;"></div>
<div style="left:1212px;top:978px;width:9.5px;height:1.3px;background:#f0f0f0;"></div>
<div style="left:1216.1px;top:973.9px;width:1.3px;height:9.5px;background:#f0f0f0;"></div>
<span style="left:1238.5px;top:969.5px;font-size:13px;color:#f0f0f0;transform:scaleX(0.9394);">100%</span>
<svg style="left:0;top:0" width="1320" height="440" viewBox="0 0 1320 440"><g font-family="'Liberation Sans',sans-serif" font-size="15" fill="#000" stroke="#000" stroke-width="0.3">
<text x="148.5" y="395.8" textLength="98" lengthAdjust="spacingAndGlyphs">ยิงโฆษณาบน</text>
<text x="541.5" y="395.8" textLength="10" lengthAdjust="spacingAndGlyphs">น</text>
<text x="698.4" y="395.8" textLength="17.6" lengthAdjust="spacingAndGlyphs">ตัว</text>
<text x="765" y="395.8" textLength="37" lengthAdjust="spacingAndGlyphs">ใช้งบ</text>
<text x="931.2" y="395.8" textLength="17.6" lengthAdjust="spacingAndGlyphs">ตัว</text>
<text x="148.6" y="419.8" textLength="81" lengthAdjust="spacingAndGlyphs">ทำโปรผ่อน</text>
<text x="698.4" y="419.8" textLength="17.6" lengthAdjust="spacingAndGlyphs">ตัว</text>
<text x="765" y="419.8" textLength="80.300" lengthAdjust="spacingAndGlyphs">ลดมาจินลง</text>
<text x="939.8" y="419.8" textLength="17.6" lengthAdjust="spacingAndGlyphs">ตัว</text>
</g></svg>
<span style="left:236px;top:405px;font-size:15px;color:#000;transform:scaleX(1.1429);-webkit-text-stroke:0.3px #000;">0%</span>
<span style="left:684.5px;top:381px;font-size:15px;color:#000;transform:scaleX(0.9375);-webkit-text-stroke:0.3px #000;">1</span>
<span style="left:684.5px;top:405px;font-size:15px;color:#000;transform:scaleX(0.9375);-webkit-text-stroke:0.3px #000;">5</span>
<span style="left:809px;top:381px;font-size:15px;color:#000;transform:scaleX(1.0694);-webkit-text-stroke:0.3px #000;">1,500</span>
<span style="left:851px;top:405px;font-size:15px;color:#000;transform:scaleX(1.0476);-webkit-text-stroke:0.3px #000;">5%</span>
<span style="left:918.5px;top:381px;font-size:15px;color:#000;transform:scaleX(0.9375);-webkit-text-stroke:0.3px #000;">3</span>
<span style="left:918.5px;top:405px;font-size:15px;color:#000;transform:scaleX(0.9688);-webkit-text-stroke:0.3px #000;">10</span>
<svg style="left:110px;top:785px;" width="150" height="110" viewBox="0 0 150 110"><defs><filter id="ash" x="-20%" y="-20%" width="150%" height="150%"><feGaussianBlur in="SourceAlpha" stdDeviation="1.6"/><feOffset dx="2" dy="2.5"/><feComponentTransfer><feFuncA type="linear" slope="0.75"/></feComponentTransfer><feMerge><feMergeNode/><feMergeNode in="SourceGraphic"/></feMerge></filter></defs>
<path filter="url(#ash)" d="M24.600 15.600 L88.500 58 L90.200 33.200 L138 97 L60.200 77.800 L82.700 67.300 L18.300 24.300 C13.500 20.500 19 11.800 24.600 15.600z" fill="#ffff00" stroke="#c9c900" stroke-width="0.8" stroke-linejoin="round"/></svg>
<div style="left:250px;top:208px;width:289px;height:771px;background:#323130;border:1px solid #474543;border-radius:5px;box-shadow:0 7px 9px -3px rgba(0,0,0,.55);"></div>
<span style="left:269px;top:217px;font-size:15px;color:#fff;font-weight:700;transform:scaleX(0.9474);">Borders</span>
<svg style="left:265.8px;top:252.9px" width="20" height="20" viewBox="0 0 20 20"><path d="M9.600 1.600v16.300M1.600 9.600h16.300" fill="none" stroke="#dcdcdc" stroke-width="1.25" stroke-dasharray="1.25 1.25"/><path d="M0.800 0v19.500" fill="none" stroke="#dcdcdc" stroke-width="1.6" stroke-dasharray="1.25 1.25"/><path d="M18.700 0v19.500" fill="none" stroke="#dcdcdc" stroke-width="1.6" stroke-dasharray="1.25 1.25"/><path d="M0 0.800h19.500" fill="none" stroke="#dcdcdc" stroke-width="1.6" stroke-dasharray="1.25 1.25"/><path d="M0 18.400h19.500" fill="none" stroke="#ebebeb" stroke-width="2.3"/></svg>
<span style="left:297px;top:255px;font-size:15px;color:#ececec;transform:scaleX(1.0421);">B<u>o</u>ttom Border</span>
<svg style="left:265.8px;top:288.9px" width="20" height="20" viewBox="0 0 20 20"><path d="M9.600 1.600v16.300M1.600 9.600h16.300" fill="none" stroke="#dcdcdc" stroke-width="1.25" stroke-dasharray="1.25 1.25"/><path d="M0.800 0v19.500" fill="none" stroke="#dcdcdc" stroke-width="1.6" stroke-dasharray="1.25 1.25"/><path d="M18.700 0v19.500" fill="none" stroke="#dcdcdc" stroke-width="1.6" stroke-dasharray="1.25 1.25"/><path d="M0 18.700h19.500" fill="none" stroke="#dcdcdc" stroke-width="1.6" stroke-dasharray="1.25 1.25"/><path d="M0 1.100h19.500" fill="none" stroke="#ebebeb" stroke-width="2.2"/></svg>
<span style="left:297px;top:291px;font-size:15px;color:#ececec;transform:scaleX(1.0137);">To<u>p</u> Border</span>
<svg style="left:265.8px;top:324.9px" width="20" height="20" viewBox="0 0 20 20"><path d="M9.600 1.600v16.300M1.600 9.600h16.300" fill="none" stroke="#dcdcdc" stroke-width="1.25" stroke-dasharray="1.25 1.25"/><path d="M18.700 0v19.500" fill="none" stroke="#dcdcdc" stroke-width="1.6" stroke-dasharray="1.25 1.25"/><path d="M0 0.800h19.500" fill="none" stroke="#dcdcdc" stroke-width="1.6" stroke-dasharray="1.25 1.25"/><path d="M0 18.700h19.500" fill="none" stroke="#dcdcdc" stroke-width="1.6" stroke-dasharray="1.25 1.25"/><path d="M1.100 0v19.500" fill="none" stroke="#ebebeb" stroke-width="2.2"/></svg>
<span style="left:297px;top:327px;font-size:15px;color:#ececec;transform:scaleX(1.0278);"><u>L</u>eft Border</span>
<svg style="left:265.8px;top:360.9px" width="20" height="20" viewBox="0 0 20 20"><path d="M9.600 1.600v16.300M1.600 9.600h16.300" fill="none" stroke="#dcdcdc" stroke-width="1.25" stroke-dasharray="1.25 1.25"/><path d="M0.800 0v19.500" fill="none" stroke="#dcdcdc" stroke-width="1.6" stroke-dasharray="1.25 1.25"/><path d="M0 0.800h19.500" fill="none" stroke="#dcdcdc" stroke-width="1.6" stroke-dasharray="1.25 1.25"/><path d="M0 18.700h19.500" fill="none" stroke="#dcdcdc" stroke-width="1.6" stroke-dasharray="1.25 1.25"/><path d="M18.400 0v19.500" fill="none" stroke="#ebebeb" stroke-width="2.2"/></svg>
<span style="left:297px;top:363px;font-size:15px;color:#ececec;transform:scaleX(1.0244);"><u>R</u>ight Border</span>
<svg style="left:265.8px;top:399.4px" width="20" height="20" viewBox="0 0 20 20"><path d="M9.600 1.600v16.300M1.600 9.600h16.300" fill="none" stroke="#dcdcdc" stroke-width="1.25" stroke-dasharray="1.25 1.25"/><path d="M0.800 0v19.500" fill="none" stroke="#dcdcdc" stroke-width="1.6" stroke-dasharray="1.25 1.25"/><path d="M18.700 0v19.500" fill="none" stroke="#dcdcdc" stroke-width="1.6" stroke-dasharray="1.25 1.25"/><path d="M0 0.800h19.500" fill="none" stroke="#dcdcdc" stroke-width="1.6" stroke-dasharray="1.25 1.25"/><path d="M0 18.700h19.500" fill="none" stroke="#dcdcdc" stroke-width="1.6" stroke-dasharray="1.25 1.25"/></svg>
<span style="left:297px;top:401.5px;font-size:15px;color:#ececec;transform:scaleX(1.0299);"><u>N</u>o Border</span>
<svg style="left:265.8px;top:435.4px" width="20" height="20" viewBox="0 0 20 20"><path d="M1.500 1.500h16.500v16.500h-16.500z M9.750 1.500v16.500M1.500 9.750h16.500" fill="none" stroke="#ebebeb" stroke-width="1.9"/></svg>
<span style="left:297px;top:437.5px;font-size:15px;color:#ececec;transform:scaleX(1.0139);"><u>A</u>ll Borders</span>
<svg style="left:265.8px;top:471.4px" width="20" height="20" viewBox="0 0 20 20"><path d="M9.600 1.600v16.300M1.600 9.600h16.300" fill="none" stroke="#dcdcdc" stroke-width="1.25" stroke-dasharray="1.25 1.25"/><path d="M1.200 1.200h17.100v17.100h-17.100z" fill="none" stroke="#ebebeb" stroke-width="2.0"/></svg>
<span style="left:297px;top:473.5px;font-size:15px;color:#ececec;transform:scaleX(0.9907);">Out<u>s</u>ide Borders</span>
<svg style="left:265.8px;top:507.4px" width="20" height="20" viewBox="0 0 20 20"><path d="M9.750 4.500v10.500M4.500 9.750h10.500" fill="none" stroke="#dcdcdc" stroke-width="1.25" stroke-dasharray="1.25 1.25"/><path d="M1.700 1.700h16.100v16.100h-16.100z" fill="none" stroke="#ebebeb" stroke-width="3.2"/></svg>
<span style="left:297px;top:509.5px;font-size:15px;color:#ececec;transform:scaleX(0.9796);"><u>T</u>hick Outside Borders</span>
<svg style="left:265.8px;top:546.4px" width="20" height="20" viewBox="0 0 20 20"><path d="M9.600 1.600v12.500M1.600 8h16.300" fill="none" stroke="#dcdcdc" stroke-width="1.25" stroke-dasharray="1.25 1.25"/><path d="M0.800 0v14.500" fill="none" stroke="#dcdcdc" stroke-width="1.6" stroke-dasharray="1.25 1.25"/><path d="M18.700 0v14.500" fill="none" stroke="#dcdcdc" stroke-width="1.6" stroke-dasharray="1.25 1.25"/><path d="M0 0.800h19.500" fill="none" stroke="#dcdcdc" stroke-width="1.6" stroke-dasharray="1.25 1.25"/><path d="M0 15.700h19.500M0 18.700h19.500" fill="none" stroke="#ebebeb" stroke-width="1.5"/></svg>
<span style="left:297px;top:548.5px;font-size:15px;color:#ececec;transform:scaleX(1.0483);"><u>B</u>ottom Double Border</span>
<svg style="left:265.8px;top:582.4px" width="20" height="20" viewBox="0 0 20 20"><path d="M9.600 1.600v13M1.600 8.300h16.300" fill="none" stroke="#dcdcdc" stroke-width="1.25" stroke-dasharray="1.25 1.25"/><path d="M0.800 0v15.500" fill="none" stroke="#dcdcdc" stroke-width="1.6" stroke-dasharray="1.25 1.25"/><path d="M18.700 0v15.500" fill="none" stroke="#dcdcdc" stroke-width="1.6" stroke-dasharray="1.25 1.25"/><path d="M0 0.800h19.500" fill="none" stroke="#dcdcdc" stroke-width="1.6" stroke-dasharray="1.25 1.25"/><path d="M0 17.900h19.500" fill="none" stroke="#ebebeb" stroke-width="3.2"/></svg>
<span style="left:297px;top:584.5px;font-size:15px;color:#ececec;transform:scaleX(1.0148);">T<u>h</u>ick Bottom Border</span>
<svg style="left:265.8px;top:618.4px" width="20" height="20" viewBox="0 0 20 20"><path d="M1 1.500v16.500M18.500 1.500v16.500M9.750 1.500v16.500M1 9.750h17.500" fill="none" stroke="#6a6866" stroke-width="1.1"/><path d="M0 1.200h19.500M0 18.300h19.500" fill="none" stroke="#8c8a88" stroke-width="1.9"/></svg>
<span style="left:297px;top:620.5px;font-size:15px;color:#ececec;transform:scaleX(1.0395);">Top an<u>d</u> Bottom Border</span>
<svg style="left:265.8px;top:654.4px" width="20" height="20" viewBox="0 0 20 20"><path d="M9.600 2.500v12.500M1.600 8.800h16.300" fill="none" stroke="#dcdcdc" stroke-width="1.25" stroke-dasharray="1.25 1.25"/><path d="M0.800 2.500v13" fill="none" stroke="#dcdcdc" stroke-width="1.6" stroke-dasharray="1.25 1.25"/><path d="M18.700 2.500v13" fill="none" stroke="#dcdcdc" stroke-width="1.6" stroke-dasharray="1.25 1.25"/><path d="M0 1.100h19.500" fill="none" stroke="#ebebeb" stroke-width="2.0"/><path d="M0 17.900h19.500" fill="none" stroke="#ebebeb" stroke-width="3.2"/></svg>
<span style="left:297px;top:656.5px;font-size:15px;color:#ececec;transform:scaleX(1.0208);">Top and Thi<u>c</u>k Bottom Border</span>
<svg style="left:265.8px;top:690.4px" width="20" height="20" viewBox="0 0 20 20"><path d="M9.600 2.500v11.500M1.600 8.300h16.300" fill="none" stroke="#dcdcdc" stroke-width="1.25" stroke-dasharray="1.25 1.25"/><path d="M0.800 2.500v12" fill="none" stroke="#dcdcdc" stroke-width="1.6" stroke-dasharray="1.25 1.25"/><path d="M18.700 2.500v12" fill="none" stroke="#dcdcdc" stroke-width="1.6" stroke-dasharray="1.25 1.25"/><path d="M0 1.100h19.500" fill="none" stroke="#ebebeb" stroke-width="2.0"/><path d="M0 15.700h19.500M0 18.700h19.500" fill="none" stroke="#ebebeb" stroke-width="1.5"/></svg>
<span style="left:297px;top:692.5px;font-size:15px;color:#ececec;transform:scaleX(1.0446);">Top and Do<u>u</u>ble Bottom Border</span>
<div style="left:292px;top:392px;width:246px;height:1px;background:#4a4846;"></div>
<div style="left:292px;top:539px;width:246px;height:1px;background:#4a4846;"></div>
<div style="left:292px;top:722px;width:246px;height:1px;background:#4a4846;"></div>
<div style="left:292px;top:940px;width:246px;height:1px;background:#4a4846;"></div>
<span style="left:269px;top:730px;font-size:15px;color:#fff;font-weight:700;transform:scaleX(0.9694);">Draw Borders</span>
<div style="left:251px;top:867px;width:287px;height:36px;background:#484644;"></div>
<span style="left:297px;top:766.5px;font-size:15px;color:#ececec;transform:scaleX(1.0120);">Dra<u>w</u> Border</span>
<span style="left:297px;top:802.5px;font-size:15px;color:#ececec;transform:scaleX(1.0087);">Draw Border <u>G</u>rid</span>
<span style="left:297px;top:838.5px;font-size:15px;color:#ececec;transform:scaleX(0.9655);"><u>E</u>rase Border</span>
<span style="left:297px;top:874.5px;font-size:15px;color:#ececec;transform:scaleX(1.0152);">L<u>i</u>ne Color</span>
<span style="left:297px;top:910.5px;font-size:15px;color:#ececec;transform:scaleX(0.9844);">Line St<u>y</u>le</span>
<span style="left:297px;top:949.5px;font-size:15px;color:#ececec;transform:scaleX(0.9706);"><u>M</u>ore Borders...</span>
<svg style="left:265px;top:765px;" width="22" height="22" viewBox="0 0 22 22"><path d="M1.600 3.600h11M1.600 3.600v15.500h18.400v-9M1.600 8.800h9M1.600 13.900h18.400M7.700 3.600v15.500M13.900 11v8.100" fill="none" stroke="#c8c6c4" stroke-width="1.300"/><path d="M1.600 3.600h6.100v5.200h-6.100z" fill="none" stroke="#e8e8e8" stroke-width="1.500"/><g transform="translate(1.500 -1.300)"><path d="M18.200 3.300L11 10.500" stroke="#3f9be0" stroke-width="3.600" stroke-linecap="round" fill="none"/><path d="M9.400 9.300l2.800 2.800-4.600 1.800z" fill="#3f9be0"/><path d="M15.300 3.900l2.500 2.500" stroke="#323130" stroke-width="0.700"/></g></svg>
<svg style="left:265px;top:801px;" width="22" height="22" viewBox="0 0 22 22"><path d="M1.600 2.600h17.800v6M1.600 2.600v17h8.500M1.600 11h11M10.500 2.600v10" fill="none" stroke="#c8c6c4" stroke-width="1.400"/><g transform="translate(1.500 6.200)"><path d="M18.200 3.300L11 10.500" stroke="#3f9be0" stroke-width="3.600" stroke-linecap="round" fill="none"/><path d="M9.400 9.300l2.800 2.800-4.600 1.800z" fill="#3f9be0"/><path d="M15.300 3.900l2.500 2.500" stroke="#323130" stroke-width="0.700"/></g></svg>
<svg style="left:264px;top:836px;" width="24" height="24" viewBox="0 0 24 24"><path d="M13.700 2.200l7.600 7.600-9.800 9.800-7.600-7.600z" fill="none" stroke="#c86ad6" stroke-width="1.500" stroke-linejoin="round"/><path d="M3.900 12l7.600 7.600 3.600-3.600-7.600-7.600z" fill="#c86ad6" stroke="#c86ad6" stroke-width="1" stroke-linejoin="round"/></svg>
<svg style="left:265px;top:872px;" width="22" height="24" viewBox="0 0 22 24"><path d="M7.500 15.300h-5v-11.800h9" fill="none" stroke="#c8c6c4" stroke-width="1.400"/><g transform="translate(1.500 -0.500)"><path d="M18.200 3.300L11 10.500" stroke="#3f9be0" stroke-width="3.600" stroke-linecap="round" fill="none"/><path d="M9.400 9.300l2.800 2.800-4.600 1.800z" fill="#3f9be0"/><path d="M15.300 3.900l2.500 2.500" stroke="#484644" stroke-width="0.700"/></g><rect x="1.300" y="17.200" width="20.400" height="4.800" fill="#c8590f"/></svg>
<svg style="left:265px;top:949px;" width="22" height="22" viewBox="0 0 22 22"><path d="M2.300 2.300h16.400v16.400h-16.400z M10.500 2.300v16.400M2.300 10.500h16.400" fill="none" stroke="#e6e6e6" stroke-width="1.500"/></svg>
<svg style="left:515px;top:874px;" width="16" height="18" viewBox="0 0 16 18"><path d="M5 3l6.500 6-6.500 6" fill="none" stroke="#dcdcdc" stroke-width="1.300" stroke-linejoin="round" stroke-linecap="round"/></svg>
<svg style="left:515px;top:910px;" width="16" height="18" viewBox="0 0 16 18"><path d="M5 3l6.500 6-6.500 6" fill="none" stroke="#dcdcdc" stroke-width="1.300" stroke-linejoin="round" stroke-linecap="round"/></svg>
<div style="left:538px;top:639px;width:203px;height:388px;background:#323130;border:1px solid #474543;border-radius:6px;box-shadow:0 7px 9px -3px rgba(0,0,0,.55);"></div>
<div style="left:553px;top:648px;width:20px;height:20px;background:#000;border:1px solid #5c5a58;"></div>
<span style="left:583px;top:648.5px;font-size:15px;color:#ececec;transform:scaleX(1.0455);">Automatic</span>
<div style="left:539px;top:676px;width:201px;height:1px;background:#4a4846;"></div>
<div style="left:539px;top:845px;width:201px;height:1px;background:#4a4846;"></div>
<div style="left:539px;top:916px;width:201px;height:1px;background:#4a4846;"></div>
<div style="left:539px;top:987px;width:201px;height:1px;background:#4a4846;"></div>
<span style="left:555px;top:687.5px;font-size:15px;color:#fff;font-weight:700;transform:scaleX(0.9796);">Theme Colors</span>
<span style="left:555px;top:856.5px;font-size:15px;color:#fff;font-weight:700;transform:scaleX(0.9652);">Standard Colors</span>
<span style="left:555px;top:927.5px;font-size:15px;color:#fff;font-weight:700;transform:scaleX(0.9600);">Recent Colors</span>
<div style="left:541.5px;top:718.5px;width:15px;height:15.5px;background:#ffffff;border:1px solid rgba(110,108,106,.55);"></div>
<div style="left:541.5px;top:750.5px;width:15px;height:79.5px;background:linear-gradient(180deg,#f2f2f2 0%,#f2f2f2 20%,#d9d9d9 20%,#d9d9d9 40%,#bfbfbf 40%,#bfbfbf 60%,#a6a6a6 60%,#a6a6a6 80%,#808080 80%,#808080 100%);border:1px solid rgba(110,108,106,.55);"></div>
<div style="left:541.5px;top:887px;width:15px;height:15.5px;background:#c00000;border:1px solid rgba(110,108,106,.55);"></div>
<div style="left:561.5px;top:718.5px;width:15px;height:15.5px;background:#000000;border:1px solid rgba(110,108,106,.55);"></div>
<div style="left:561.5px;top:750.5px;width:15px;height:79.5px;background:linear-gradient(180deg,#808080 0%,#808080 20%,#595959 20%,#595959 40%,#404040 40%,#404040 60%,#262626 60%,#262626 80%,#0d0d0d 80%,#0d0d0d 100%);border:1px solid rgba(110,108,106,.55);"></div>
<div style="left:561.5px;top:887px;width:15px;height:15.5px;background:#ff0000;border:1px solid rgba(110,108,106,.55);"></div>
<div style="left:581.5px;top:718.5px;width:15px;height:15.5px;background:#e7e6e6;border:1px solid rgba(110,108,106,.55);"></div>
<div style="left:581.5px;top:750.5px;width:15px;height:79.5px;background:linear-gradient(180deg,#d0cece 0%,#d0cece 20%,#aeaaaa 20%,#aeaaaa 40%,#757171 40%,#757171 60%,#3a3838 60%,#3a3838 80%,#161616 80%,#161616 100%);border:1px solid rgba(110,108,106,.55);"></div>
<div style="left:581.5px;top:887px;width:15px;height:15.5px;background:#ffc000;border:1px solid rgba(110,108,106,.55);"></div>
<div style="left:601.5px;top:718.5px;width:15px;height:15.5px;background:#44546a;border:1px solid rgba(110,108,106,.55);"></div>
<div style="left:601.5px;top:750.5px;width:15px;height:79.5px;background:linear-gradient(180deg,#d6dce5 0%,#d6dce5 20%,#adb9ca 20%,#adb9ca 40%,#8497b0 40%,#8497b0 60%,#333f50 60%,#333f50 80%,#222a35 80%,#222a35 100%);border:1px solid rgba(110,108,106,.55);"></div>
<div style="left:601.5px;top:887px;width:15px;height:15.5px;background:#ffff00;border:1px solid rgba(110,108,106,.55);"></div>
<div style="left:621.5px;top:718.5px;width:15px;height:15.5px;background:#4472c4;border:1px solid rgba(110,108,106,.55);"></div>
<div style="left:621.5px;top:750.5px;width:15px;height:79.5px;background:linear-gradient(180deg,#dae3f3 0%,#dae3f3 20%,#b4c7e7 20%,#b4c7e7 40%,#8faadc 40%,#8faadc 60%,#2f5597 60%,#2f5597 80%,#203864 80%,#203864 100%);border:1px solid rgba(110,108,106,.55);"></div>
<div style="left:621.5px;top:887px;width:15px;height:15.5px;background:#92d050;border:1px solid rgba(110,108,106,.55);"></div>
<div style="left:641.5px;top:718.5px;width:15px;height:15.5px;background:#ed7d31;border:1px solid rgba(110,108,106,.55);"></div>
<div style="left:641.5px;top:750.5px;width:15px;height:79.5px;background:linear-gradient(180deg,#fbe5d6 0%,#fbe5d6 20%,#f8cbad 20%,#f8cbad 40%,#f4b183 40%,#f4b183 60%,#c55a11 60%,#c55a11 80%,#843c0c 80%,#843c0c 100%);border:1px solid rgba(110,108,106,.55);"></div>
<div style="left:641.5px;top:887px;width:15px;height:15.5px;background:#00b050;border:1px solid rgba(110,108,106,.55);"></div>
<div style="left:661.5px;top:718.5px;width:15px;height:15.5px;background:#a5a5a5;border:1px solid rgba(110,108,106,.55);"></div>
<div style="left:661.5px;top:750.5px;width:15px;height:79.5px;background:linear-gradient(180deg,#ededed 0%,#ededed 20%,#dbdbdb 20%,#dbdbdb 40%,#c9c9c9 40%,#c9c9c9 60%,#7c7c7c 60%,#7c7c7c 80%,#525252 80%,#525252 100%);border:1px solid rgba(110,108,106,.55);"></div>
<div style="left:661.5px;top:887px;width:15px;height:15.5px;background:#00b0f0;border:1px solid rgba(110,108,106,.55);"></div>
<div style="left:681.5px;top:718.5px;width:15px;height:15.5px;background:#ffc000;border:1px solid rgba(110,108,106,.55);"></div>
<div style="left:681.5px;top:750.5px;width:15px;height:79.5px;background:linear-gradient(180deg,#fff2cc 0%,#fff2cc 20%,#ffe699 20%,#ffe699 40%,#ffd966 40%,#ffd966 60%,#bf9000 60%,#bf9000 80%,#806000 80%,#806000 100%);border:1px solid rgba(110,108,106,.55);"></div>
<div style="left:681.5px;top:887px;width:15px;height:15.5px;background:#0070c0;border:1px solid rgba(110,108,106,.55);"></div>
<div style="left:701.5px;top:718.5px;width:15px;height:15.5px;background:#5b9bd5;border:1px solid rgba(110,108,106,.55);"></div>
<div style="left:701.5px;top:750.5px;width:15px;height:79.5px;background:linear-gradient(180deg,#deebf7 0%,#deebf7 20%,#bdd7ee 20%,#bdd7ee 40%,#9dc3e6 40%,#9dc3e6 60%,#2e75b6 60%,#2e75b6 80%,#1f4e79 80%,#1f4e79 100%);border:1px solid rgba(110,108,106,.55);"></div>
<div style="left:701.5px;top:887px;width:15px;height:15.5px;background:#002060;border:1px solid rgba(110,108,106,.55);"></div>
<div style="left:721.5px;top:718.5px;width:15px;height:15.5px;background:#70ad47;border:1px solid rgba(110,108,106,.55);"></div>
<div style="left:721.5px;top:750.5px;width:15px;height:79.5px;background:linear-gradient(180deg,#e2f0d9 0%,#e2f0d9 20%,#c5e0b4 20%,#c5e0b4 40%,#a9d18e 40%,#a9d18e 60%,#548235 60%,#548235 80%,#385723 80%,#385723 100%);border:1px solid rgba(110,108,106,.55);"></div>
<div style="left:721.5px;top:887px;width:15px;height:15.5px;background:#7030a0;border:1px solid rgba(110,108,106,.55);"></div>
<div style="left:641px;top:798px;width:16px;height:16px;background:#c55a11;border:1px solid #f3d6a6;box-shadow:inset 0 0 0 1px #e07a2a;"></div>
<div style="left:541.5px;top:958.5px;width:15.5px;height:15.5px;background:#b5b48a;border:1px solid rgba(110,108,106,.55);"></div>
<div style="left:561.5px;top:958.5px;width:15.5px;height:15.5px;background:#cd5c5c;border:1px solid rgba(110,108,106,.55);"></div>
<svg style="left:552px;top:994px;" width="22" height="22" viewBox="0 0 22 22"><path d="M11 2c5 0 9 3.200 9 7.600 0 3-2.300 4.600-4.800 4.400-2-0.200-3 0.400-2.800 1.800 0.300 1.800 0 3.600-2.200 3.700-3.800 0.200-8.200-3.400-8.200-8.700 0-5 4-8.800 9-8.800z" fill="none" stroke="#e4e4e4" stroke-width="1.300"/>
<circle cx="6" cy="9" r="1.300" fill="#4aa3e8"/><circle cx="8.500" cy="5.800" r="1.300" fill="#6cc04a"/><circle cx="12.500" cy="5.200" r="1.300" fill="#f2c12e"/><circle cx="15.800" cy="7.600" r="1.300" fill="#ef6a3a"/><circle cx="14.800" cy="11.600" r="1.300" fill="#d64ad0"/></svg>
<span style="left:584px;top:997px;font-size:15px;color:#ececec;transform:scaleX(0.9677);"><u>M</u>ore Colors...</span>
<svg style="left:1120px;top:0px;opacity:.27" width="200" height="130" viewBox="1120 0 200 130">
<defs><mask id="wm"><rect x="1120" y="0" width="200" height="130" fill="#fff"/>
<path d="M1158.500 14.500h50l-2.200 9.300h-15.600l-12.200 50.500h-17l12.200-50.500h-17.400z" fill="#000"/></mask></defs>
<g fill="#fff">
<g mask="url(#wm)">
<path d="M1169 9c21 0 38 16 38 37 0 14-8 22-14 31-4 6-7 13-8 26h-26c-1-11-5-19-11-27-8-10-17-17-17-30 0-21 17-37 38-37z"/>
</g>
<path d="M1160 105.500l25-3.500v3.600l-25 3.500z M1160 110.700l25-3.500v3.600l-25 3.500z M1162 116l21-3v2.500c-3 3.500-16 5.500-21 3.500z"/>
<text x="1206" y="74.500" font-family="Liberation Sans" font-weight="bold" font-style="italic" font-size="72" textLength="95" lengthAdjust="spacingAndGlyphs" stroke="#fff" stroke-width="3.200" stroke-linejoin="miter">ips</text>
<text x="1234.500" y="31.500" font-family="Liberation Sans" font-weight="bold" font-size="13" textLength="27" lengthAdjust="spacingAndGlyphs">THA</text>
<text x="1273.500" y="31.500" font-family="Liberation Sans" font-weight="bold" font-size="13" textLength="37.500" lengthAdjust="spacingAndGlyphs">WARE</text>
<circle cx="1267" cy="27" r="5.700"/>
</g>
<path d="M1266.200 24.800h1.700v5.800h-1.700z M1266.100 22.200h1.900v1.700h-1.900z" fill="#000"/>
</svg>
</div></body></html>
